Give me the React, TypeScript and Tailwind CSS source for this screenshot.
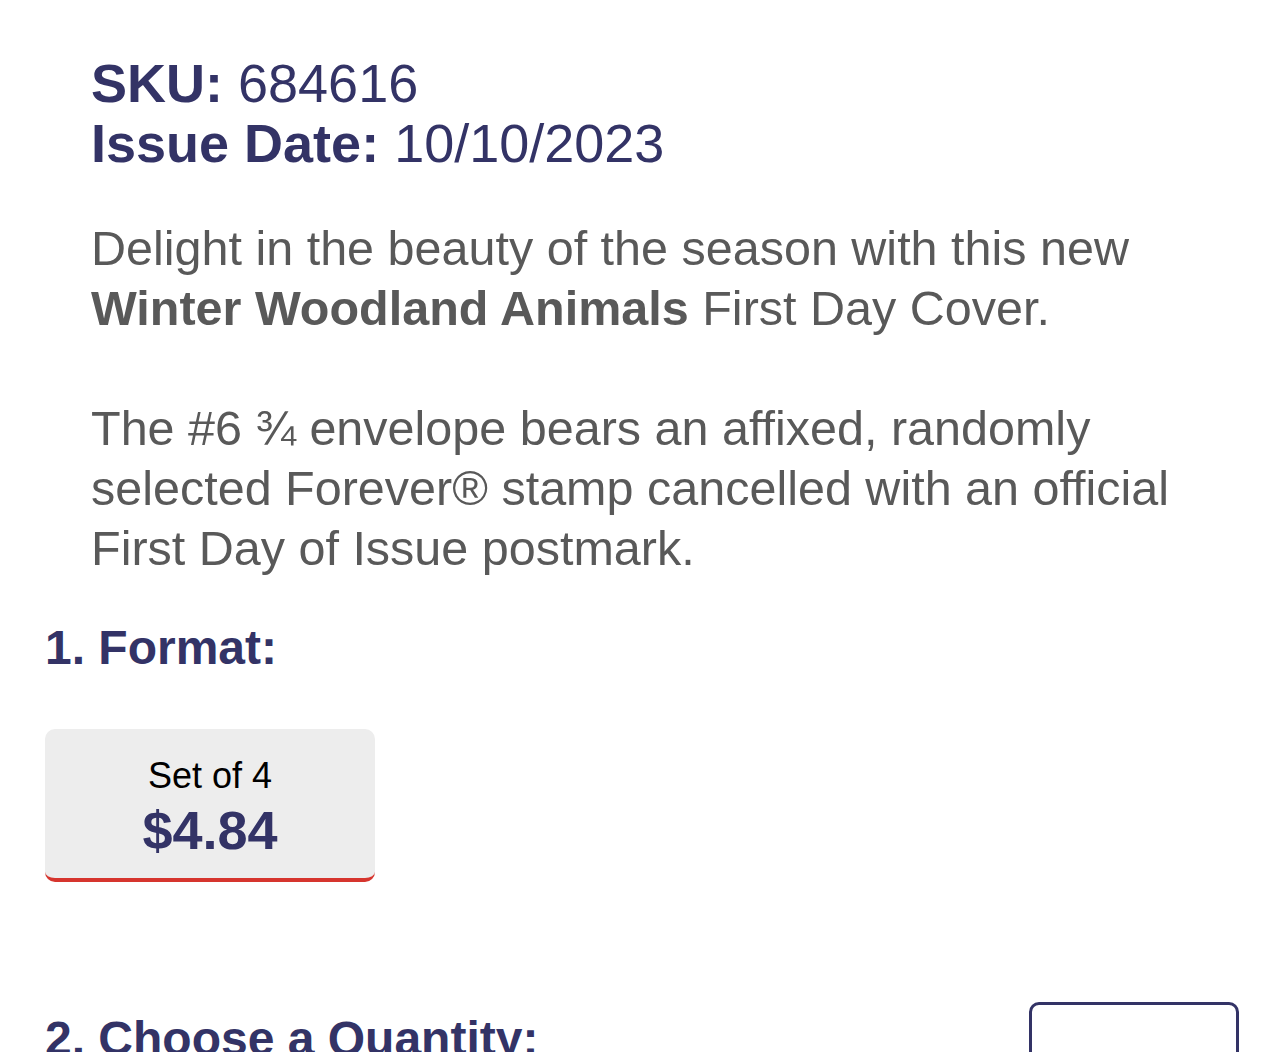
export default function App() {
  return (
    <div className="min-h-[1052px] bg-white px-[45px] pt-[53px] font-['Liberation_Sans',Arial,sans-serif]">
      <div className="pl-[46px]">
        <div className="text-[54px] leading-[60px] text-[#333366]">
          <p>
            <span className="font-bold">SKU:</span> 684616
          </p>
          <p>
            <span className="font-bold">Issue Date:</span> 10/10/2023
          </p>
        </div>

        <div className="mt-[45px] text-[48.5px] leading-[60px] text-[#595959]">
          <p>
            Delight in the beauty of the season with this new{" "}
            <span className="font-bold">Winter Woodland Animals</span> First Day Cover.
          </p>
          <p className="mt-[60px]">
            The #6 ¾ envelope bears an affixed, randomly selected Forever® stamp
            cancelled with an official First Day of Issue postmark.
          </p>
        </div>
      </div>

      <h2 className="mt-[40px] text-[48px] font-bold leading-[60px] text-[#333366]">
        1. Format:
      </h2>

      <button
        type="button"
        className="mt-[51px] flex h-[153px] w-[330px] flex-col items-center rounded-[10px] border-b-[4px] border-[#d6352e] bg-[#ededed] pt-[25px]"
      >
        <span className="text-[36px] leading-[44px] text-black">Set of 4</span>
        <span className="mt-[2px] text-[54px] font-bold leading-[60px] text-[#333366]">
          $4.84
        </span>
      </button>

      <div className="mt-[120px] flex items-start justify-between">
        <h2 className="mt-[7px] text-[48px] font-bold leading-[60px] text-[#333366]">
          2. Choose a Quantity:
        </h2>
        <div className="h-[90px] w-[210px] rounded-[10px] border-[3px] border-[#333366]" />
      </div>
    </div>
  );
}
